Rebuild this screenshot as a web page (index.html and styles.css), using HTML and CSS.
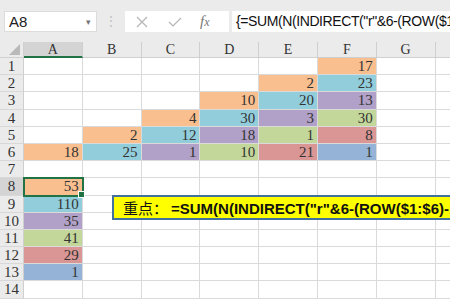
FILE: index.html
```html
<!DOCTYPE html>
<html>
<head>
<meta name="viewport" content="width=device-width, initial-scale=1">
<link rel="stylesheet" href="styles.css">
</head>
<body>

<div class="toolbar">
  <div class="namebox">
    <span>A8</span>
    <span class="caret">&#9662;</span>
  </div>
  <div class="grip">&#8942;</div>
  <div class="fbar">
    <div class="ficons">
      <svg class="ic" width="12" height="12" viewBox="0 0 12 12"><path d="M1 1L11 11M11 1L1 11" stroke="#b4b4b4" stroke-width="1.2" fill="none"/></svg>
      <svg class="ic" width="14" height="12" viewBox="0 0 14 12"><path d="M1 6L5 10L13 2" stroke="#b4b4b4" stroke-width="1.2" fill="none"/></svg>
      <span class="fx">f<i>x</i></span>
    </div>
    <div class="ftext">{=SUM(N(INDIRECT("r"&amp;6-(ROW($1:$6)-1)&amp;"c"&amp;COLUMN($A:$F),0)))}</div>
  </div>
</div>

<div class="sheet">
  <!-- column headers -->
  <div class="corner"></div>
  <div class="ch sel">A</div><div class="ch">B</div><div class="ch">C</div><div class="ch">D</div>
  <div class="ch">E</div><div class="ch">F</div><div class="ch">G</div><div class="ch"></div>

  <!-- 1 -->
  <div class="rh">1</div>
  <div class="c"></div><div class="c"></div><div class="c"></div><div class="c"></div>
  <div class="c"></div><div class="c org">17</div><div class="c"></div><div class="c"></div>
  <!-- 2 -->
  <div class="rh">2</div>
  <div class="c"></div><div class="c"></div><div class="c"></div><div class="c"></div>
  <div class="c org">2</div><div class="c teal">23</div><div class="c"></div><div class="c"></div>
  <!-- 3 -->
  <div class="rh">3</div>
  <div class="c"></div><div class="c"></div><div class="c"></div><div class="c org">10</div>
  <div class="c teal">20</div><div class="c purp">13</div><div class="c"></div><div class="c"></div>
  <!-- 4 -->
  <div class="rh">4</div>
  <div class="c"></div><div class="c"></div><div class="c org">4</div><div class="c teal">30</div>
  <div class="c purp">3</div><div class="c grn">30</div><div class="c"></div><div class="c"></div>
  <!-- 5 -->
  <div class="rh">5</div>
  <div class="c"></div><div class="c org">2</div><div class="c teal">12</div><div class="c purp">18</div>
  <div class="c grn">1</div><div class="c red">8</div><div class="c"></div><div class="c"></div>
  <!-- 6 -->
  <div class="rh">6</div>
  <div class="c org">18</div><div class="c teal">25</div><div class="c purp">1</div><div class="c grn">10</div>
  <div class="c red">21</div><div class="c blue">1</div><div class="c"></div><div class="c"></div>
  <!-- 7 -->
  <div class="rh">7</div>
  <div class="c"></div><div class="c"></div><div class="c"></div><div class="c"></div>
  <div class="c"></div><div class="c"></div><div class="c"></div><div class="c"></div>
  <!-- 8 -->
  <div class="rh sel">8</div>
  <div class="c org active">53<span class="handle"></span></div><div class="c"></div><div class="c"></div><div class="c"></div>
  <div class="c"></div><div class="c"></div><div class="c"></div><div class="c"></div>
  <!-- 9 -->
  <div class="rh">9</div>
  <div class="c teal">110</div><div class="c"></div><div class="c"></div><div class="c"></div>
  <div class="c"></div><div class="c"></div><div class="c"></div><div class="c"></div>
  <!-- 10 -->
  <div class="rh">10</div>
  <div class="c purp">35</div><div class="c"></div><div class="c"></div><div class="c"></div>
  <div class="c"></div><div class="c"></div><div class="c"></div><div class="c"></div>
  <!-- 11 -->
  <div class="rh">11</div>
  <div class="c grn">41</div><div class="c"></div><div class="c"></div><div class="c"></div>
  <div class="c"></div><div class="c"></div><div class="c"></div><div class="c"></div>
  <!-- 12 -->
  <div class="rh">12</div>
  <div class="c red">29</div><div class="c"></div><div class="c"></div><div class="c"></div>
  <div class="c"></div><div class="c"></div><div class="c"></div><div class="c"></div>
  <!-- 13 -->
  <div class="rh">13</div>
  <div class="c blue">1</div><div class="c"></div><div class="c"></div><div class="c"></div>
  <div class="c"></div><div class="c"></div><div class="c"></div><div class="c"></div>
  <!-- 14 -->
  <div class="rh">14</div>
  <div class="c"></div><div class="c"></div><div class="c"></div><div class="c"></div>
  <div class="c"></div><div class="c"></div><div class="c"></div><div class="c"></div>

  <div class="note"><span class="cn">重点：</span><b>=SUM(N(INDIRECT("r"&amp;6-(ROW($1:$6)-1)&amp;"c"&amp;COLUMN($A:$F),0)))</b></div>
</div>

</body>
</html>
```

FILE: styles.css
```css
body {
    margin: 0;
    width: 450px;
    height: 299px;
    overflow: hidden;
    background: #fff;
    font-family: "Liberation Serif", serif;
}

.toolbar {
    height: 42px;
    background: #ebebeb;
    display: flex;
    align-items: flex-start;
    padding: 11px 0 0 4px;
    box-sizing: border-box;
}

.namebox {
    width: 93px;
    height: 21px;
    background: #fff;
    border: 1px solid #dcdcdc;
    box-sizing: border-box;
    display: flex;
    align-items: center;
    justify-content: space-between;
    padding: 0 5px 0 4px;
    font-family: "Liberation Sans", sans-serif;
    font-size: 15px;
    color: #222;
}

.caret {
    font-size: 9px;
    color: #777;
}

.grip {
    width: 28px;
    text-align: center;
    color: #c4c4c4;
    font-size: 14px;
    line-height: 21px;
}

.fbar {
    flex: 1;
    height: 21px;
    display: flex;
    white-space: nowrap;
    overflow: hidden;
}

.ficons {
    width: 104px;
    flex-shrink: 0;
    background: #fff;
    display: flex;
    align-items: center;
    gap: 20px;
    padding-left: 11px;
    box-sizing: border-box;
}

.ic {
    display: block;
}

.fx {
    font-family: "Liberation Serif", serif;
    font-style: italic;
    font-size: 15px;
    color: #777;
    margin-left: -2px;
}

.fx i {
    font-size: 12px;
}

.ftext {
    margin-left: 3px;
    background: #fff;
    flex: 1;
    padding-left: 4px;
    font-family: "Liberation Sans", sans-serif;
    font-size: 14px;
    letter-spacing: -0.4px;
    line-height: 21px;
    color: #111;
}

.sheet {
    position: relative;
    display: grid;
    grid-template-columns: 24px repeat(8, 58.8px);
    grid-template-rows: 16px;
    grid-auto-rows: 17.2px;
}

.corner {
    background: #ebebeb;
    border-right: 1px solid #d0d0d0;
    border-bottom: 1px solid #d0d0d0;
    box-sizing: border-box;
    position: relative;
}

.corner::after {
    content: "";
    position: absolute;
    right: 3px;
    bottom: 2px;
    border-left: 11px solid transparent;
    border-bottom: 11px solid #b9b9b9;
}

.ch {
    background: #ebebeb;
    border-right: 1px solid #cfcfcf;
    border-bottom: 1px solid #cfcfcf;
    box-sizing: border-box;
    text-align: center;
    font-size: 14px;
    line-height: 16px;
    color: #333;
}

.ch.sel {
    background: #d4d4d4;
    border-bottom: 2px solid #217346;
}

.rh {
    background: #ebebeb;
    border-right: 1px solid #cfcfcf;
    border-bottom: 1px solid #d8d8d8;
    box-sizing: border-box;
    font-size: 15px;
    line-height: 17px;
    text-align: center;
    color: #333;
}

.rh.sel {
    background: #d4d4d4;
}

.c {
    border-right: 1px solid #dadada;
    border-bottom: 1px solid #dadada;
    box-sizing: border-box;
    text-align: right;
    padding-right: 3px;
    font-size: 15px;
    line-height: 17px;
    color: #333;
}

.org { background: #fabf8f; }
.teal { background: #92cddc; }
.purp { background: #b1a0c7; }
.grn { background: #c4d79b; }
.red { background: #da9694; }
.blue { background: #95b3d7; }

.active {
    position: relative;
    outline: 2px solid #217346;
    outline-offset: -1px;
    z-index: 1;
}

.handle {
    position: absolute;
    right: -3px;
    bottom: -3px;
    width: 5px;
    height: 5px;
    background: #217346;
    border: 1px solid #fff;
}

.note {
    position: absolute;
    left: 112px;
    top: 153px;
    width: 400px;
    height: 25px;
    background: #ffff00;
    border: 2px solid #41719c;
    box-sizing: border-box;
    padding-left: 9px;
    white-space: nowrap;
    line-height: 21px;
    color: #111;
}

.cn {
    font-family: "Noto Sans CJK SC", sans-serif;
    font-size: 15px;
}

.note b {
    font-family: "Liberation Sans", sans-serif;
    font-size: 15px;
    margin-left: 3px;
}
```
